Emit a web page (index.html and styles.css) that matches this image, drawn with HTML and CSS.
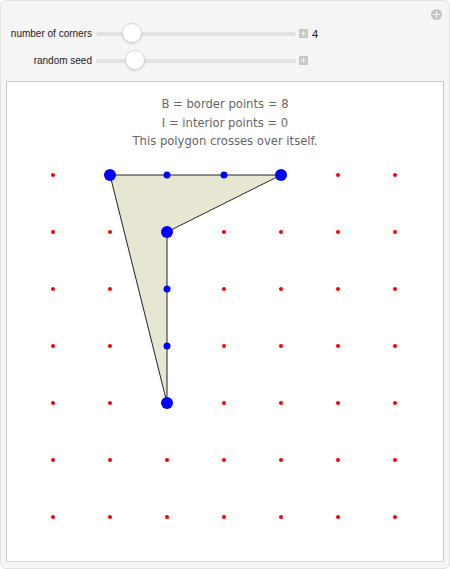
FILE: index.html
```html
<!DOCTYPE html>
<html lang="en">
<head>
    <meta charset="UTF-8">
    <title>Pick's Theorem</title>
    <link rel="stylesheet" href="styles.css">
</head>
<body>
    <div class="panel">
        <span class="close-btn"></span>

        <div class="controls">
            <div class="row">
                <label class="label">number of corners</label>
                <div class="track"><span class="thumb thumb-corners"></span></div>
                <span class="plus"></span>
                <span class="value">4</span>
            </div>
            <div class="row">
                <label class="label">random seed</label>
                <div class="track"><span class="thumb thumb-seed"></span></div>
                <span class="plus"></span>
            </div>
        </div>

        <div class="plot">
            <svg width="436" height="479" viewBox="0 0 436 479">
                <g class="caption">
                    <text x="218" y="26">B = border points = 8</text>
                    <text x="218" y="45">I = interior points = 0</text>
                    <text x="218" y="63">This polygon crosses over itself.</text>
                </g>

                <g id="grid" fill="#ff0000"></g>

                <polygon points="103,93 274,93 160,150 160,321" fill="#e6e6d3" stroke="#222" stroke-width="1"/>

                <g fill="#0000ff">
                    <circle cx="160" cy="93" r="3.5"/>
                    <circle cx="217" cy="93" r="3.5"/>
                    <circle cx="160" cy="207" r="3.5"/>
                    <circle cx="160" cy="264" r="3.5"/>
                    <circle cx="103" cy="93" r="6"/>
                    <circle cx="274" cy="93" r="6"/>
                    <circle cx="160" cy="150" r="6"/>
                    <circle cx="160" cy="321" r="6"/>
                </g>
            </svg>
        </div>
    </div>

    <script>
        // red lattice points, 7 x 7
        const grid = document.getElementById("grid");
        const ns = "http://www.w3.org/2000/svg";
        for (let i = 0; i < 7; i++) {
            for (let j = 0; j < 7; j++) {
                const dot = document.createElementNS(ns, "circle");
                dot.setAttribute("cx", 46 + i * 57);
                dot.setAttribute("cy", 93 + j * 57);
                dot.setAttribute("r", 2);
                grid.appendChild(dot);
            }
        }
    </script>
</body>
</html>
```

FILE: styles.css
```css
body {
    margin: 0;
    font-family: "Liberation Sans", Arial, sans-serif;
    background: #ffffff;
}

.panel {
    position: relative;
    width: 450px;
    height: 569px;
    box-sizing: border-box;
    background: #f5f5f5;
    border: 1px solid #e2e2e2;
    border-radius: 6px;
}

/* small round "+" in the corner */
.close-btn {
    position: absolute;
    top: 8px;
    right: 7px;
    width: 11px;
    height: 11px;
    border-radius: 50%;
    background: #c4c4c4;
}

.close-btn::before,
.close-btn::after {
    content: "";
    position: absolute;
    background: #f5f5f5;
}

.close-btn::before {
    left: 2px;
    top: 5px;
    width: 7px;
    height: 1px;
}

.close-btn::after {
    left: 5px;
    top: 2px;
    width: 1px;
    height: 7px;
}

.controls {
    padding-top: 19px;
    padding-bottom: 1px;
}

.row {
    display: flex;
    align-items: center;
    height: 27px;
}

.label {
    width: 91px;
    text-align: right;
    font-size: 10px;
    color: #222;
    margin-right: 4px;
}

.track {
    position: relative;
    width: 200px;
    height: 4px;
    border-radius: 2px;
    background: #e2e2e2;
}

.thumb {
    position: absolute;
    top: -9px;
    width: 20px;
    height: 20px;
    box-sizing: border-box;
    border-radius: 50%;
    background: #ffffff;
    border: 1px solid #dadada;
    box-shadow: 0 1px 2px rgba(0, 0, 0, 0.15);
}

.thumb-corners {
    left: 26px;
}

.thumb-seed {
    left: 29px;
}

.plus {
    position: relative;
    width: 9px;
    height: 9px;
    margin-left: 3px;
    background: #c8c8c8;
}

.plus::before,
.plus::after {
    content: "";
    position: absolute;
    background: #f0f0f0;
}

.plus::before {
    left: 2px;
    top: 4px;
    width: 5px;
    height: 1px;
}

.plus::after {
    left: 4px;
    top: 2px;
    width: 1px;
    height: 5px;
}

.value {
    margin-left: 4px;
    font-size: 11px;
    color: #222;
}

.plot {
    margin: 6px 5px 0 5px;
    width: 436px;
    height: 479px;
    background: #ffffff;
    border: 1px solid #c8c8c8;
    border-bottom-color: #d8d8d8;
}

.plot svg {
    display: block;
}

.caption text {
    font-family: "DejaVu Sans", Verdana, sans-serif;
    font-size: 11.6px;
    fill: #666666;
    text-anchor: middle;
}
```
